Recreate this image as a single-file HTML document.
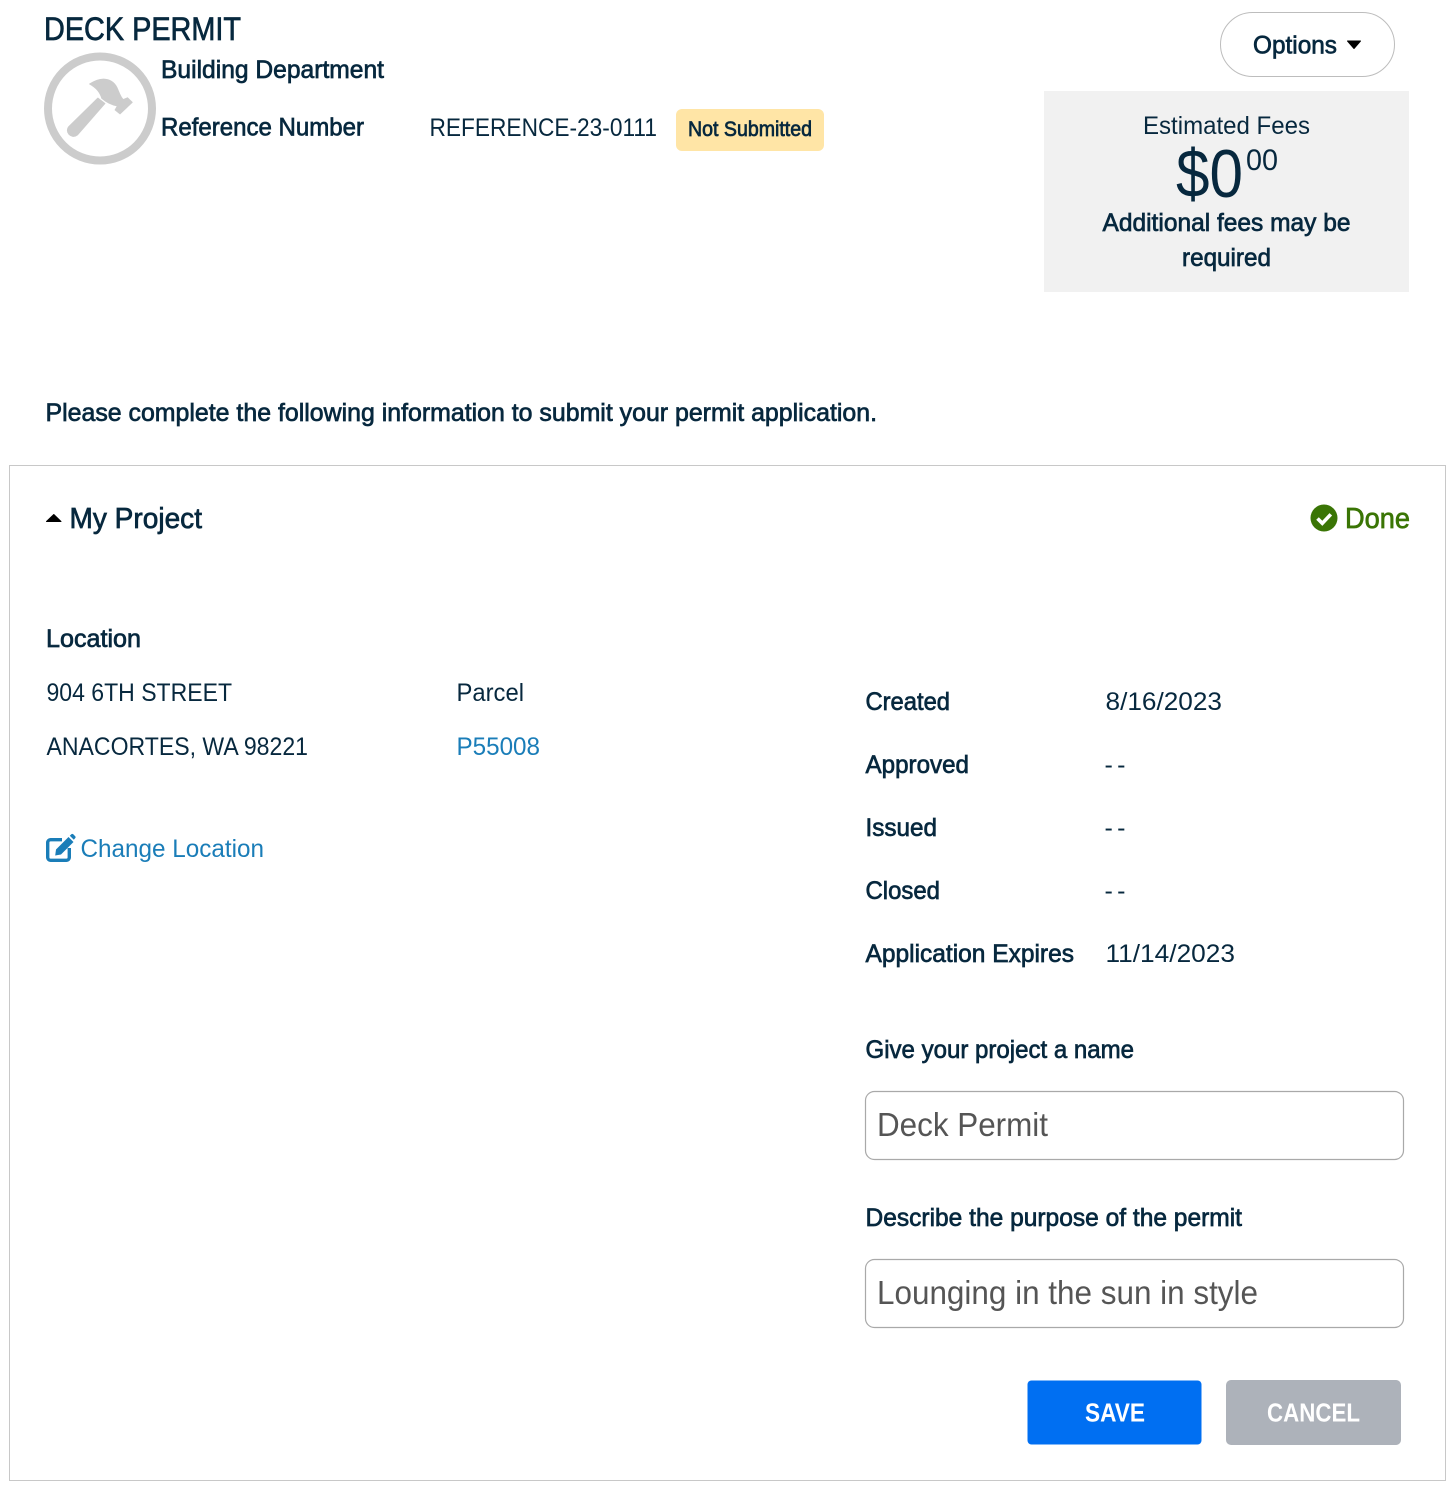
<!DOCTYPE html>
<html lang="en">
<head>
<meta charset="utf-8">
<title>Deck Permit</title>
<style>
html,body{margin:0;padding:0;background:#fff;}
body{position:relative;width:1452px;height:1489px;overflow:hidden;}
svg{position:absolute;left:0;top:0;display:block;}
text{font-family:"Liberation Sans",Arial,sans-serif;fill:#07283e;}
.m{stroke:#07283e;stroke-width:.7px;}
.l{fill:#07283e;}
.a{fill:#1a7db8;}
.i{fill:#555;}
</style>
</head>
<body>
<svg width="1452" height="1489" viewBox="0 0 1452 1489" xmlns="http://www.w3.org/2000/svg">
  <!-- hammer badge -->
  <circle cx="100" cy="108.500" r="52" fill="none" stroke="#cccccc" stroke-width="8"/>
  <path fill="#cccccc" stroke="#cccccc" stroke-width=".8" stroke-linejoin="round" d="M89.500 84C95 80.500 99 79 103.500 79C110 79.200 114.500 82.500 117 87.500C119.500 93 120.500 97 123.300 99.500L127.500 97.700L132.300 102.300L120 114L115 110L117.300 106C112 105 106 102 101.700 98.300C100 92 96 87.500 89.500 84Z"/>
  <path fill="#cccccc" stroke="#cccccc" stroke-width=".8" stroke-linejoin="round" d="M97.800 98L105 103.500L77.500 135C74.500 137.500 71 136.500 69 134.500C67 132 66.800 129 68.800 126.500Z"/>

  <text x="44" y="40" font-size="32" class="m" textLength="197" lengthAdjust="spacingAndGlyphs">DECK PERMIT</text>
  <text x="161" y="78" font-size="25" class="m" textLength="223" lengthAdjust="spacingAndGlyphs">Building Department</text>
  <text x="161" y="135.500" font-size="25" class="m" textLength="203" lengthAdjust="spacingAndGlyphs">Reference Number</text>
  <text x="429.500" y="136" font-size="25" class="l" textLength="227.500" lengthAdjust="spacingAndGlyphs">REFERENCE-23-0111</text>

  <rect x="676" y="109" width="148" height="42" rx="6" fill="#ffe5a6"/>
  <text x="688" y="136" font-size="21" class="m" textLength="124" lengthAdjust="spacingAndGlyphs">Not Submitted</text>

  <!-- options -->
  <rect x="1220.500" y="12.500" width="174" height="64" rx="32" fill="#fff" stroke="#bdbdbd"/>
  <text x="1253" y="53.500" font-size="25" class="m" textLength="84" lengthAdjust="spacingAndGlyphs">Options</text>
  <path d="M1347.500 41h13l-6.500 7.500z" fill="#000" stroke="#000" stroke-linejoin="round"/>

  <!-- fees -->
  <rect x="1044" y="91" width="365" height="201" fill="#f1f1f1"/>
  <text x="1143" y="134" font-size="25" class="l" textLength="167" lengthAdjust="spacingAndGlyphs">Estimated Fees</text>
  <text x="1176" y="197" font-size="68" class="l" textLength="67" lengthAdjust="spacingAndGlyphs">$0</text>
  <text x="1246" y="170" font-size="30" class="l" textLength="32" lengthAdjust="spacingAndGlyphs">00</text>
  <text x="1102.500" y="231" font-size="25" class="m" textLength="248" lengthAdjust="spacingAndGlyphs">Additional fees may be</text>
  <text x="1182" y="266" font-size="25" class="m" textLength="89" lengthAdjust="spacingAndGlyphs">required</text>

  <text x="45.500" y="421" font-size="25" class="m" textLength="831.500" lengthAdjust="spacingAndGlyphs">Please complete the following information to submit your permit application.</text>

  <!-- card -->
  <rect x="9.500" y="465.500" width="1436" height="1015" fill="#fff" stroke="#c8c8c8"/>

  <path d="M46.500 521.500h14.500l-7.200-7z" fill="#000" stroke="#000" stroke-linejoin="round"/>
  <text x="69.500" y="528" font-size="29" class="m" textLength="132.500" lengthAdjust="spacingAndGlyphs">My Project</text>

  <circle cx="1324" cy="518" r="13.500" fill="#3a7505"/>
  <path d="M1317.500 518.500l4.800 4.800 8.500-9" fill="none" stroke="#fff" stroke-width="3.600"/>
  <text x="1345" y="528" font-size="29" style="fill:#3a7505;stroke:#3a7505;stroke-width:.7px" textLength="65" lengthAdjust="spacingAndGlyphs">Done</text>

  <text x="46" y="647" font-size="25" class="m" textLength="95" lengthAdjust="spacingAndGlyphs">Location</text>
  <text x="46.500" y="701" font-size="25" class="l" textLength="185.500" lengthAdjust="spacingAndGlyphs">904 6TH STREET</text>
  <text x="456.500" y="701" font-size="25" class="l" textLength="67.500" lengthAdjust="spacingAndGlyphs">Parcel</text>
  <text x="46.500" y="755" font-size="25" class="l" textLength="261.500" lengthAdjust="spacingAndGlyphs">ANACORTES, WA 98221</text>
  <text x="456.500" y="755" font-size="25" class="a" textLength="83.500" lengthAdjust="spacingAndGlyphs">P55008</text>

  <!-- edit icon -->
  <path fill="none" stroke="#1a7db8" stroke-width="3.400" stroke-linejoin="round" d="M62 839.700H50.500a2.800 2.800 0 0 0-2.800 2.800v15a2.800 2.800 0 0 0 2.800 2.800h16a2.800 2.800 0 0 0 2.800-2.800V848"/>
  <path fill="#1a7db8" d="M56 849.500L68.500 837l5 5L61 854.500l-5.800 1z"/>
  <path fill="#1a7db8" d="M69.800 835.700l1.400-1.300a1.600 1.600 0 0 1 2.200 0l1.700 1.700a1.600 1.600 0 0 1 0 2.200l-1.300 1.400z"/>
  <text x="80.500" y="857" font-size="25" class="a" textLength="183.500" lengthAdjust="spacingAndGlyphs">Change Location</text>

  <!-- dates -->
  <text x="865.500" y="710" font-size="25" class="m" textLength="84.500" lengthAdjust="spacingAndGlyphs">Created</text>
  <text x="1105.500" y="710" font-size="25" class="l" textLength="116.500" lengthAdjust="spacingAndGlyphs">8/16/2023</text>
  <text x="865.500" y="773" font-size="25" class="m" textLength="103.500" lengthAdjust="spacingAndGlyphs">Approved</text>
  <text x="1104.500" y="773" font-size="25" class="l" textLength="21" lengthAdjust="spacing">- -</text>
  <text x="865.500" y="836" font-size="25" class="m" textLength="71.500" lengthAdjust="spacingAndGlyphs">Issued</text>
  <text x="1104.500" y="836" font-size="25" class="l" textLength="21" lengthAdjust="spacing">- -</text>
  <text x="865.500" y="899" font-size="25" class="m" textLength="74.500" lengthAdjust="spacingAndGlyphs">Closed</text>
  <text x="1104.500" y="899" font-size="25" class="l" textLength="21" lengthAdjust="spacing">- -</text>
  <text x="865.500" y="962" font-size="25" class="m" textLength="208.500" lengthAdjust="spacingAndGlyphs">Application Expires</text>
  <text x="1105.500" y="962" font-size="25" class="l" textLength="129.500" lengthAdjust="spacingAndGlyphs">11/14/2023</text>

  <!-- form -->
  <text x="865.500" y="1058" font-size="25" class="m" textLength="268.500" lengthAdjust="spacingAndGlyphs">Give your project a name</text>
  <rect x="865.500" y="1091.500" width="538" height="68" rx="9" fill="#fff" stroke="#a9a9a9" stroke-width="1.200"/>
  <text x="877" y="1136" font-size="33" class="i" textLength="171" lengthAdjust="spacingAndGlyphs">Deck Permit</text>

  <text x="865.500" y="1226" font-size="25" class="m" textLength="376.500" lengthAdjust="spacingAndGlyphs">Describe the purpose of the permit</text>
  <rect x="865.500" y="1259.500" width="538" height="68" rx="9" fill="#fff" stroke="#a9a9a9" stroke-width="1.200"/>
  <text x="877" y="1304" font-size="33" class="i" textLength="381" lengthAdjust="spacingAndGlyphs">Lounging in the sun in style</text>

  <!-- buttons -->
  <rect x="1027.500" y="1380.500" width="174" height="64" rx="4" fill="#006ff2"/>
  <text x="1085" y="1421.500" font-size="26" font-weight="700" style="fill:#fff" textLength="60" lengthAdjust="spacingAndGlyphs">SAVE</text>
  <rect x="1226" y="1380" width="175" height="65" rx="5" fill="#adb2ba"/>
  <text x="1267" y="1421.500" font-size="26" font-weight="700" style="fill:#fff" textLength="93" lengthAdjust="spacingAndGlyphs">CANCEL</text>
</svg>
</body>
</html>
